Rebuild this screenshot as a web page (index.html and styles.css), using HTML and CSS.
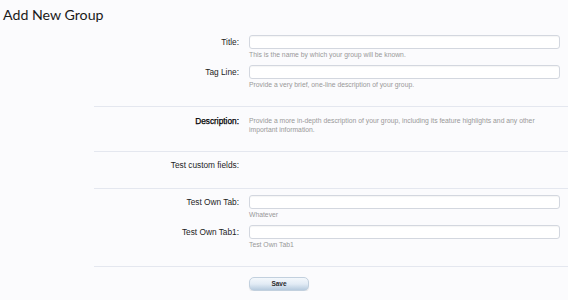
FILE: index.html
```html
<!DOCTYPE html>
<html>
<head>
<meta charset="utf-8">
<link rel="stylesheet" href="styles.css">
</head>
<body>
<h1 class="page-title">Add New Group</h1>
<form class="form">
  <div class="section">
    <div class="row">
      <label class="label">Title:</label>
      <div class="field">
        <input class="text-input" type="text">
        <p class="hint">This is the name by which your group will be known.</p>
      </div>
    </div>
    <div class="row">
      <label class="label">Tag Line:</label>
      <div class="field">
        <input class="text-input" type="text">
        <p class="hint">Provide a very brief, one-line description of your group.</p>
      </div>
    </div>
  </div>
  <div class="section section-desc">
    <div class="row row-text">
      <label class="label label-bold">Description:</label>
      <div class="field">
        <p class="hint hint-desc">Provide a more in-depth description of your group, including its feature highlights and any other important information.</p>
      </div>
    </div>
  </div>
  <div class="section section-custom">
    <div class="row row-text">
      <label class="label">Test custom fields:</label>
      <div class="field"></div>
    </div>
  </div>
  <div class="section section-tabs">
    <div class="row">
      <label class="label">Test Own Tab:</label>
      <div class="field">
        <input class="text-input" type="text">
        <p class="hint">Whatever</p>
      </div>
    </div>
    <div class="row">
      <label class="label">Test Own Tab1:</label>
      <div class="field">
        <input class="text-input" type="text">
        <p class="hint">Test Own Tab1</p>
      </div>
    </div>
  </div>
  <div class="section section-submit">
    <div class="row">
      <div class="label"></div>
      <div class="field">
        <button class="button" type="button">Save</button>
      </div>
    </div>
  </div>
</form>
</body>
</html>
```
FILE: styles.css
```css
html, body {
  margin: 0;
  padding: 0;
  background: #fbfbfd;
}
body {
  font-family: "Liberation Sans", Arial, sans-serif;
  color: #222;
}
.page-title {
  margin: 0;
  height: 28px;
  padding: 5px 0 0 3px;
  box-sizing: border-box;
  font-family: Lato, "Liberation Sans", sans-serif;
  font-weight: normal;
  font-size: 14.2px;
  line-height: 20px;
  color: #1a1a1a;
}
.form {
  margin-left: 94px;
}
.section {
  border-bottom: 1px solid #e4e7ef;
  padding: 7px 0 16px;
  display: flex;
  flex-direction: column;
  gap: 5px;
}
.section-desc {
  padding: 9px 0 15px;
}
.section-custom {
  padding: 8px 0 18px;
}
.section-tabs {
  padding: 6px 0 16px;
}
.section-submit {
  border-bottom: none;
  padding: 10px 0 0;
}
.row {
  display: grid;
  grid-template-columns: 145px 311px;
  column-gap: 10px;
}
.label {
  text-align: right;
  font-size: 8.3px;
  line-height: 14px;
  color: #1e1e1e;
}
.label-bold {
  color: #000;
  -webkit-text-stroke: 0.25px #000;
}
.row-text .label {
  line-height: 10px;
}
.field {
  display: flex;
  flex-direction: column;
}
.text-input {
  box-sizing: border-box;
  width: 311px;
  height: 14px;
  margin: 0;
  border: 1px solid #d3d7df;
  border-radius: 3px;
  background: #fff;
  box-shadow: inset 0 1px 1px rgba(0,0,0,0.04);
  padding: 0 3px;
}
.hint {
  margin: 1px 0 0;
  font-size: 6.8px;
  line-height: 10px;
  color: #999;
}
.hint-desc {
  margin: 0;
  line-height: 9px;
  width: 300px;
  padding-bottom: 2px;
}
.button {
  width: 60px;
  height: 14px;
  margin: 0;
  padding: 0;
  border: 1px solid #c2d0de;
  border-radius: 5px;
  background: linear-gradient(to bottom, #f4f8fc 0%, #e2ebf5 50%, #b6cade 100%);
  font-family: "Liberation Sans", Arial, sans-serif;
  font-weight: bold;
  font-size: 6.5px;
  line-height: 12px;
  color: #2a2a2a;
  box-shadow: 0 1px 1px rgba(0,0,0,0.1);
}
```
